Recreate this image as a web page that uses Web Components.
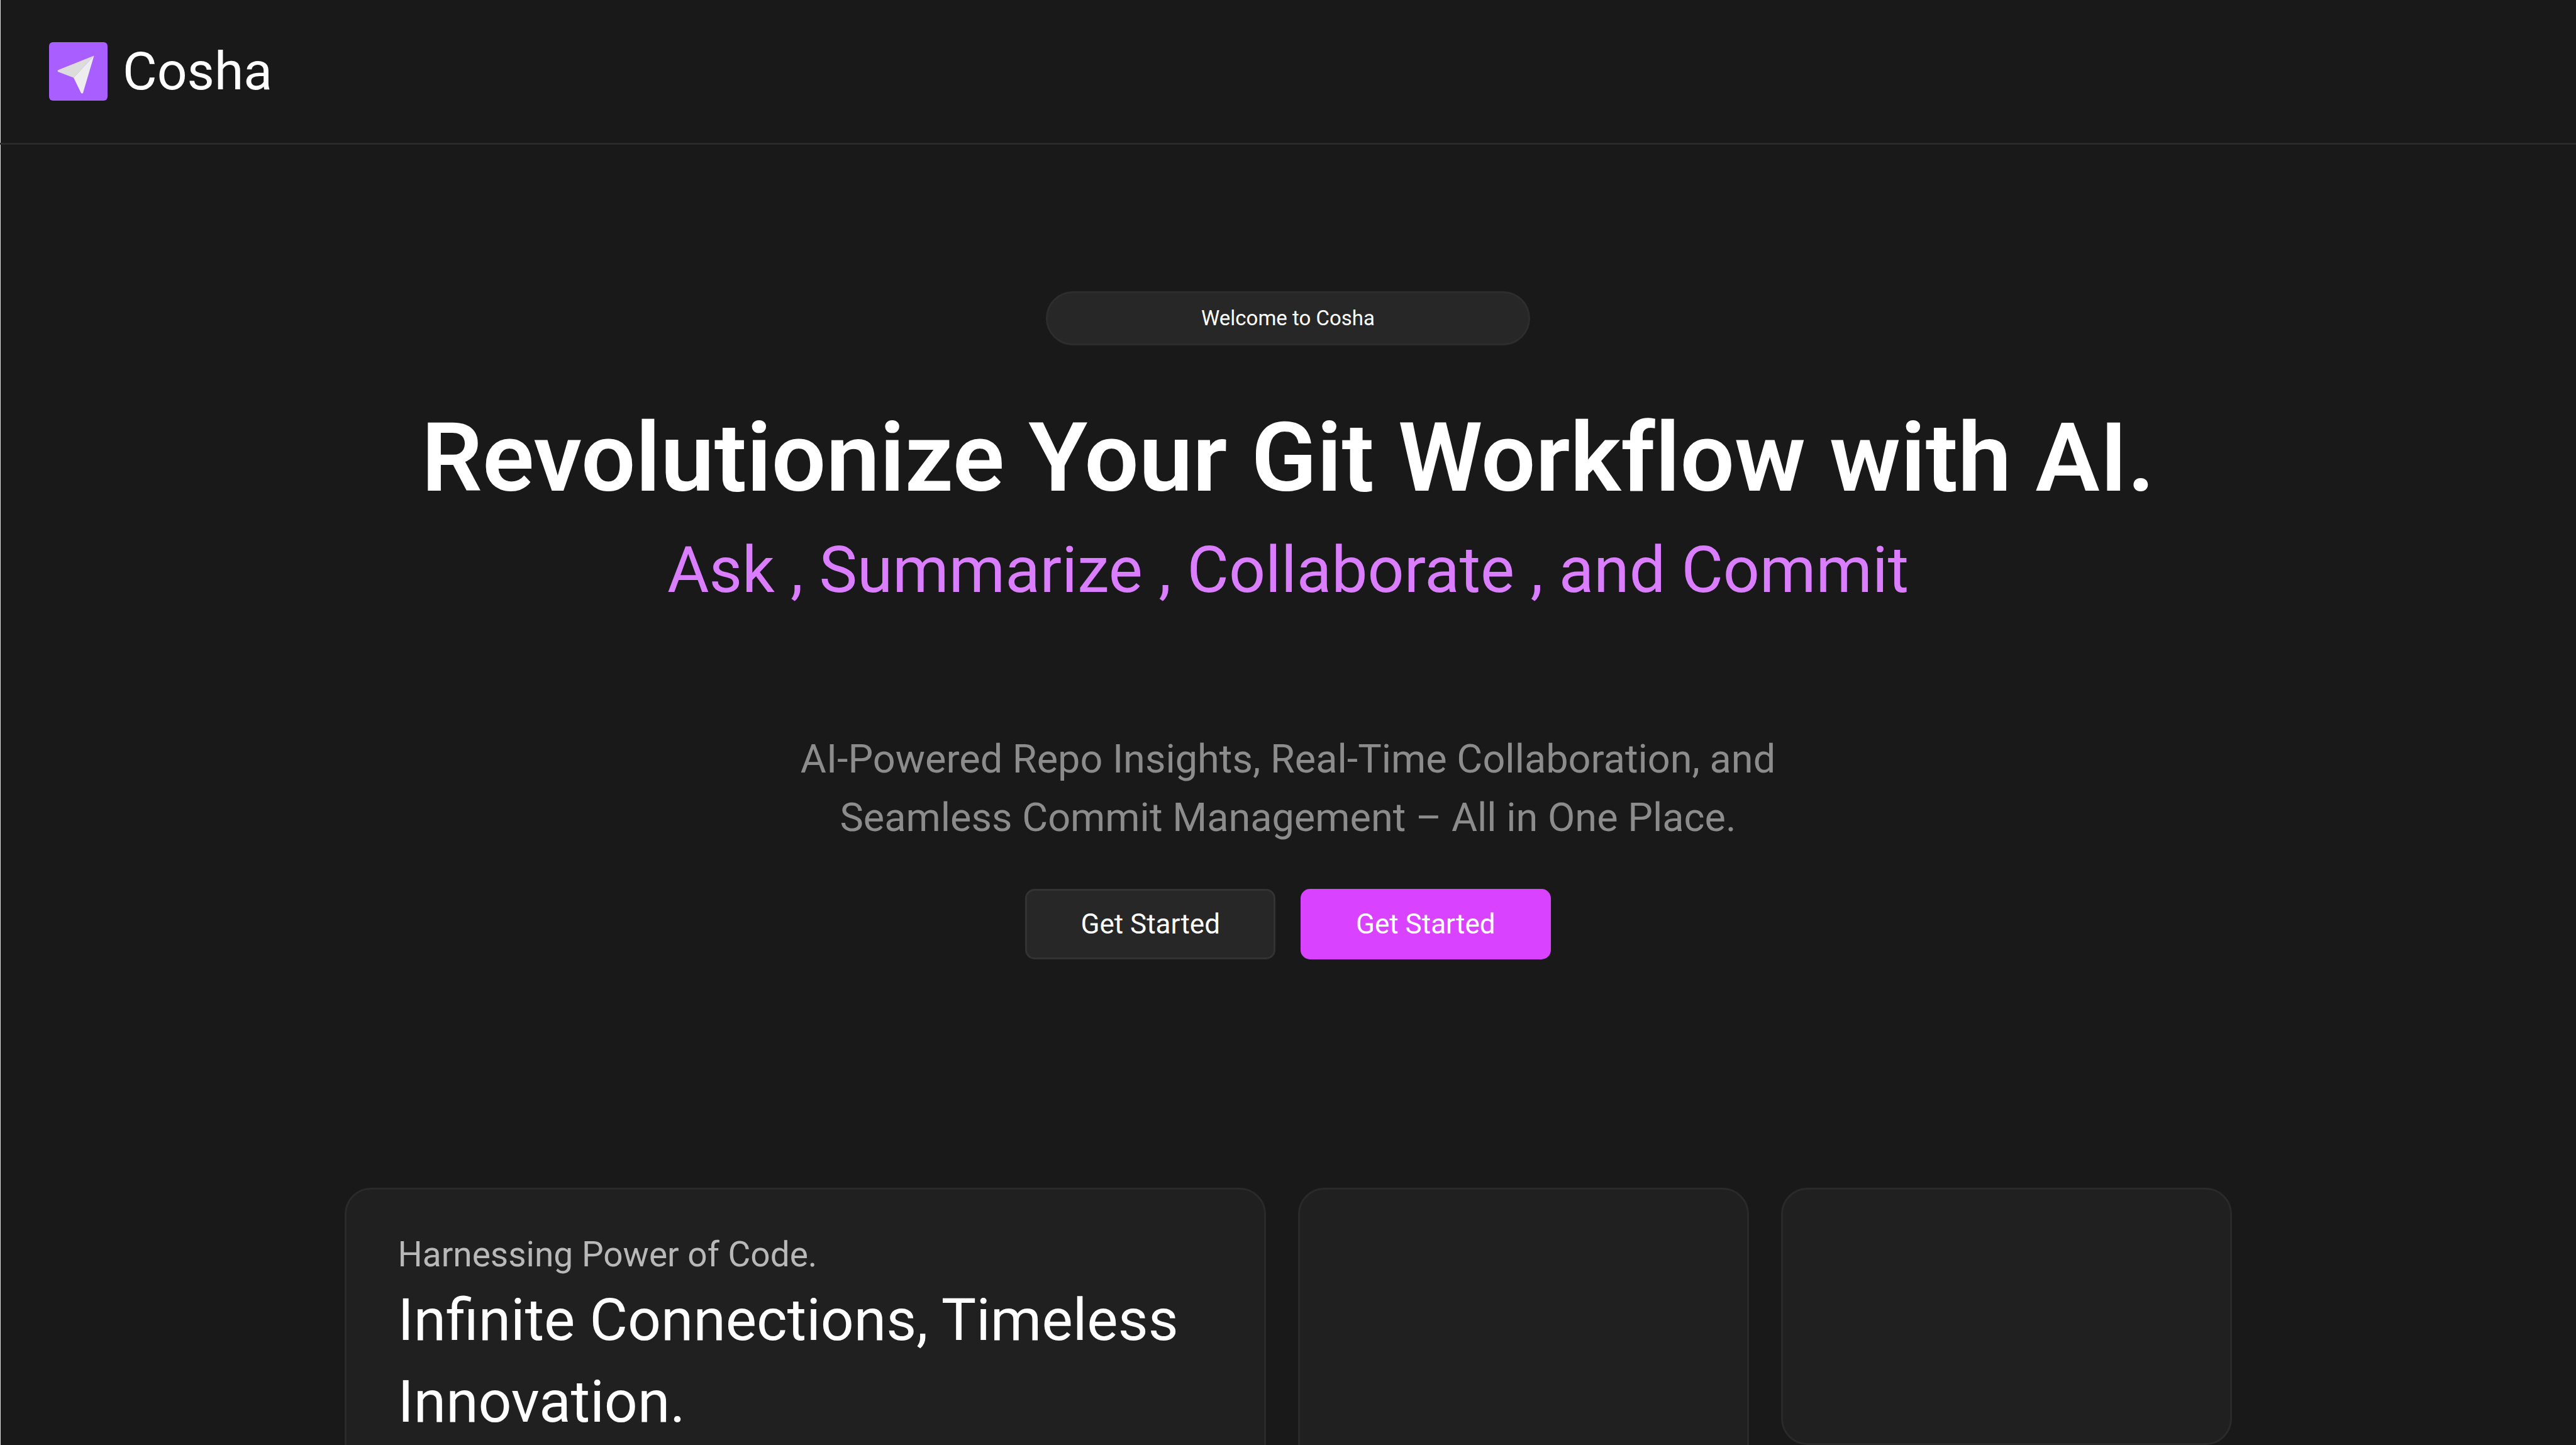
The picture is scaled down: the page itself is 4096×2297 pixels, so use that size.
<!DOCTYPE html>
<html lang="en">
<head>
<meta charset="utf-8">
<title>Cosha</title>
<style>
  :root {
    --bg: #191919;
    --line: #2a2a2a;
    --surface: #202020;
    --raised: #272727;
    --accent: #d943ff;
  }
  body {
    margin: 0;
    height: 100vh;
    box-sizing: border-box;
    overflow: hidden;
    background: var(--bg);
    box-shadow: inset 1px 0 #e0e0e0;
    color: #fff;
    font-family: Roboto, "Liberation Sans", sans-serif;
  }
</style>
</head>
<body>
<cosha-header>Cosha</cosha-header>
<main>
  <cosha-hero>
    <cosha-pill slot="badge">Welcome to Cosha</cosha-pill>
    <span slot="title">Revolutionize Your Git Workflow with AI.</span>
    <span slot="tagline">Ask , Summarize , Collaborate , and Commit</span>
    <span slot="text">AI-Powered Repo Insights, Real-Time Collaboration, and Seamless Commit Management – All in One Place.</span>
    <cosha-button slot="actions">Get Started</cosha-button>
    <cosha-button slot="actions" primary>Get Started</cosha-button>
  </cosha-hero>
  <cosha-features>
    <cosha-card size="tall">
      <span slot="eyebrow">Harnessing Power of Code.</span>
      <span slot="title">Infinite Connections, Timeless Innovation.</span>
    </cosha-card>
    <cosha-card size="tall"></cosha-card>
    <cosha-card></cosha-card>
  </cosha-features>
</main>

<script>
  const define = (name, html) => {
    const template = document.createElement('template');
    template.innerHTML = html;
    customElements.define(name, class extends HTMLElement {
      constructor() {
        super();
        this.attachShadow({ mode: 'open' }).append(template.content.cloneNode(true));
      }
    });
  };

  define('cosha-logo', `
    <style>
      :host { display: block; width: 93px; height: 93px; }
      svg { display: block; width: 100%; height: 100%; }
    </style>
    <svg viewBox="0 0 106 106" aria-hidden="true">
      <rect width="106" height="106" rx="7" fill="#a95fff"/>
      <path d="M81.5 24.5 16.5 50.5Q14.5 52 16 53.5L44.5 64.5Z" fill="#dcdcdc"/>
      <path d="M81.5 24.5 44.5 64.5 58 92Q60 94 61.5 92Z" fill="#ededed"/>
    </svg>`);

  define('cosha-header', `
    <style>
      :host { display: block; border-bottom: 3px solid var(--line); }
      header { display: flex; align-items: center; padding: 67px 78px; }
      a { display: flex; align-items: center; gap: 24px; color: inherit; text-decoration: none;
          font-size: 84px; line-height: 93px; }
    </style>
    <header><a href="#"><cosha-logo></cosha-logo><span><slot></slot></span></a></header>`);

  define('cosha-pill', `
    <style>
      :host { display: block; box-sizing: border-box; width: 770px; padding: 20px; text-align: center;
              font-size: 33px; line-height: 40px; background: var(--raised);
              border: 3px solid #2d2d2d; border-radius: 43px; }
    </style>
    <slot></slot>`);

  define('cosha-button', `
    <style>
      :host { display: block; }
      button { display: block; margin: 0; padding: 27px 85px; font: inherit; font-size: 44px; line-height: 52px;
               color: #fff; background: var(--raised); border: 3px solid #333; border-radius: 15px; cursor: pointer; }
      :host([primary]) button { background: var(--accent); border-color: var(--accent); }
    </style>
    <button type="button"><slot></slot></button>`);

  define('cosha-hero', `
    <style>
      :host { display: block; }
      section { display: flex; flex-direction: column; align-items: center; padding: 233px 80px 363px; text-align: center; }
      h1, h2, p { margin: 0; }
      h1 { margin-top: 87px; font-size: 153px; line-height: 184px; font-weight: 600; font-variant-ligatures: none; }
      h2 { margin-top: 24px; font-size: 102px; line-height: 124px; font-weight: 400; color: #da7dff; }
      p { max-width: 1700px; margin-top: 192px; font-size: 63px; line-height: 93px; color: #8c8c8c; }
      .actions { display: flex; gap: 40px; margin-top: 67px; }
    </style>
    <section>
      <slot name="badge"></slot>
      <h1><slot name="title"></slot></h1>
      <h2><slot name="tagline"></slot></h2>
      <p><slot name="text"></slot></p>
      <div class="actions"><slot name="actions"></slot></div>
    </section>`);

  define('cosha-features', `
    <style>
      :host { display: grid; grid-template-columns: 1465fr 717fr 717fr; gap: 51px; align-items: start;
              max-width: 3001px; margin: 0 auto; }
    </style>
    <slot></slot>`);

  define('cosha-card', `
    <style>
      :host { display: block; box-sizing: border-box; min-height: 409px; padding: 67px 82px;
              background: var(--surface); border: 3px solid var(--line); border-radius: 42px; }
      :host([size="tall"]) { min-height: 868px; }
      p, h3 { margin: 0; font-weight: 400; }
      p { font-size: 55px; line-height: 72px; color: #b8b8b8; }
      h3 { margin-top: 4px; font-size: 93px; line-height: 130px; }
    </style>
    <p><slot name="eyebrow"></slot></p>
    <h3><slot name="title"></slot></h3>`);
</script>
</body>
</html>
